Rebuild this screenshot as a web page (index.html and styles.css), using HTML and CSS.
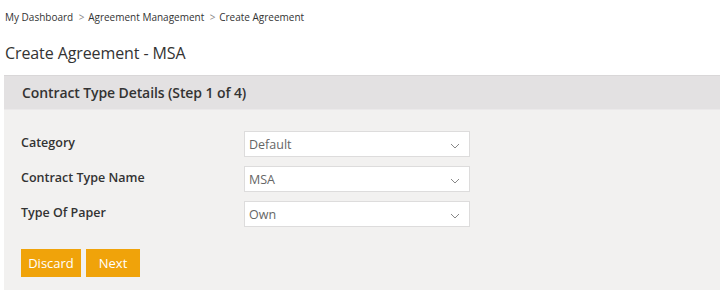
FILE: index.html
```html
<!DOCTYPE html>
<html lang="en">
<head>
  <meta charset="UTF-8" />
  <title>Create Agreement - MSA</title>
  <link rel="stylesheet" href="styles.css">
</head>
<body>
  <div class="breadcrumb">
    <a href="#">My Dashboard</a>
    <span class="sep">&gt;</span>
    <a href="#">Agreement Management</a>
    <span class="sep">&gt;</span>
    <span>Create Agreement</span>
  </div>

  <h1>Create Agreement - MSA</h1>

  <div class="panel">
    <div class="panel-head">Contract Type Details (Step 1 of 4)</div>
    <div class="panel-body">
      <div class="campo">
        <label for="categoria">Category</label>
        <div class="caja">
          <select id="categoria">
            <option>Default</option>
          </select>
          <svg class="flecha" width="10" height="6" viewBox="0 0 10 6"><path d="M1 1l4 4 4-4" fill="none" stroke="#888" stroke-width="1"/></svg>
        </div>
      </div>
      <div class="campo">
        <label for="nombre">Contract Type Name</label>
        <div class="caja">
          <select id="nombre">
            <option>MSA</option>
          </select>
          <svg class="flecha" width="10" height="6" viewBox="0 0 10 6"><path d="M1 1l4 4 4-4" fill="none" stroke="#888" stroke-width="1"/></svg>
        </div>
      </div>
      <div class="campo">
        <label for="papel">Type Of Paper</label>
        <div class="caja">
          <select id="papel">
            <option>Own</option>
          </select>
          <svg class="flecha" width="10" height="6" viewBox="0 0 10 6"><path d="M1 1l4 4 4-4" fill="none" stroke="#888" stroke-width="1"/></svg>
        </div>
      </div>

      <div class="acciones">
        <button class="btn btn-discard">Discard</button>
        <button class="btn btn-next">Next</button>
      </div>
    </div>
  </div>
</body>
</html>
```

FILE: styles.css
```css
body {
  margin: 0;
  padding: 0 0 0 4px;
  font-family: 'Open Sans', 'Noto Sans', sans-serif;
  color: #333;
  background: #ffffff;
}
.breadcrumb {
  padding: 9px 0 0 1px;
  font-size: 10px;
  line-height: 16px;
  color: #333;
}
.breadcrumb a {
  color: #333;
  text-decoration: none;
}
.breadcrumb .sep {
  color: #888;
  margin: 0 1px 0 3px;
}
h1 {
  margin: 16px 0 0 1px;
  font-size: 16px;
  font-weight: 400;
  line-height: 24px;
  color: #333;
  letter-spacing: -0.1px;
}
.panel {
  margin-top: 10px;
  background: #f2f1f0;
}
.panel-head {
  height: 33px;
  line-height: 33px;
  padding-left: 18px;
  background: #e3e1e2;
  border-top: 1px solid #d9d7d8;
  font-size: 14px;
  font-weight: 600;
  color: #333;
  letter-spacing: -0.1px;
}
.panel-body {
  padding: 21px 0 13px 17px;
  border-top: 1px solid #ebe9ea;
}
.campo {
  display: flex;
  align-items: center;
  margin-bottom: 9px;
}
.campo label {
  width: 223px;
  padding-bottom: 3px;
  font-size: 12.5px;
  font-weight: 600;
  color: #333;
}
.caja {
  position: relative;
  width: 226px;
  height: 26px;
}
.caja select {
  width: 100%;
  height: 26px;
  padding: 0 4px;
  border: 1px solid #dddcdc;
  background: #ffffff;
  font-family: inherit;
  font-size: 12.5px;
  color: #666;
  appearance: none;
  -webkit-appearance: none;
  border-radius: 0;
}
.flecha {
  position: absolute;
  right: 10px;
  top: 12px;
  pointer-events: none;
}
.acciones {
  display: flex;
  gap: 5px;
  margin-top: 22px;
}
.btn {
  height: 28px;
  padding: 0;
  border: none;
  background: #f0a30a;
  color: #ffffff;
  font-family: inherit;
  font-size: 13px;
  cursor: pointer;
}
.btn-discard {
  width: 60px;
}
.btn-next {
  width: 54px;
}
.btn:hover {
  background: #dd9608;
}
```
